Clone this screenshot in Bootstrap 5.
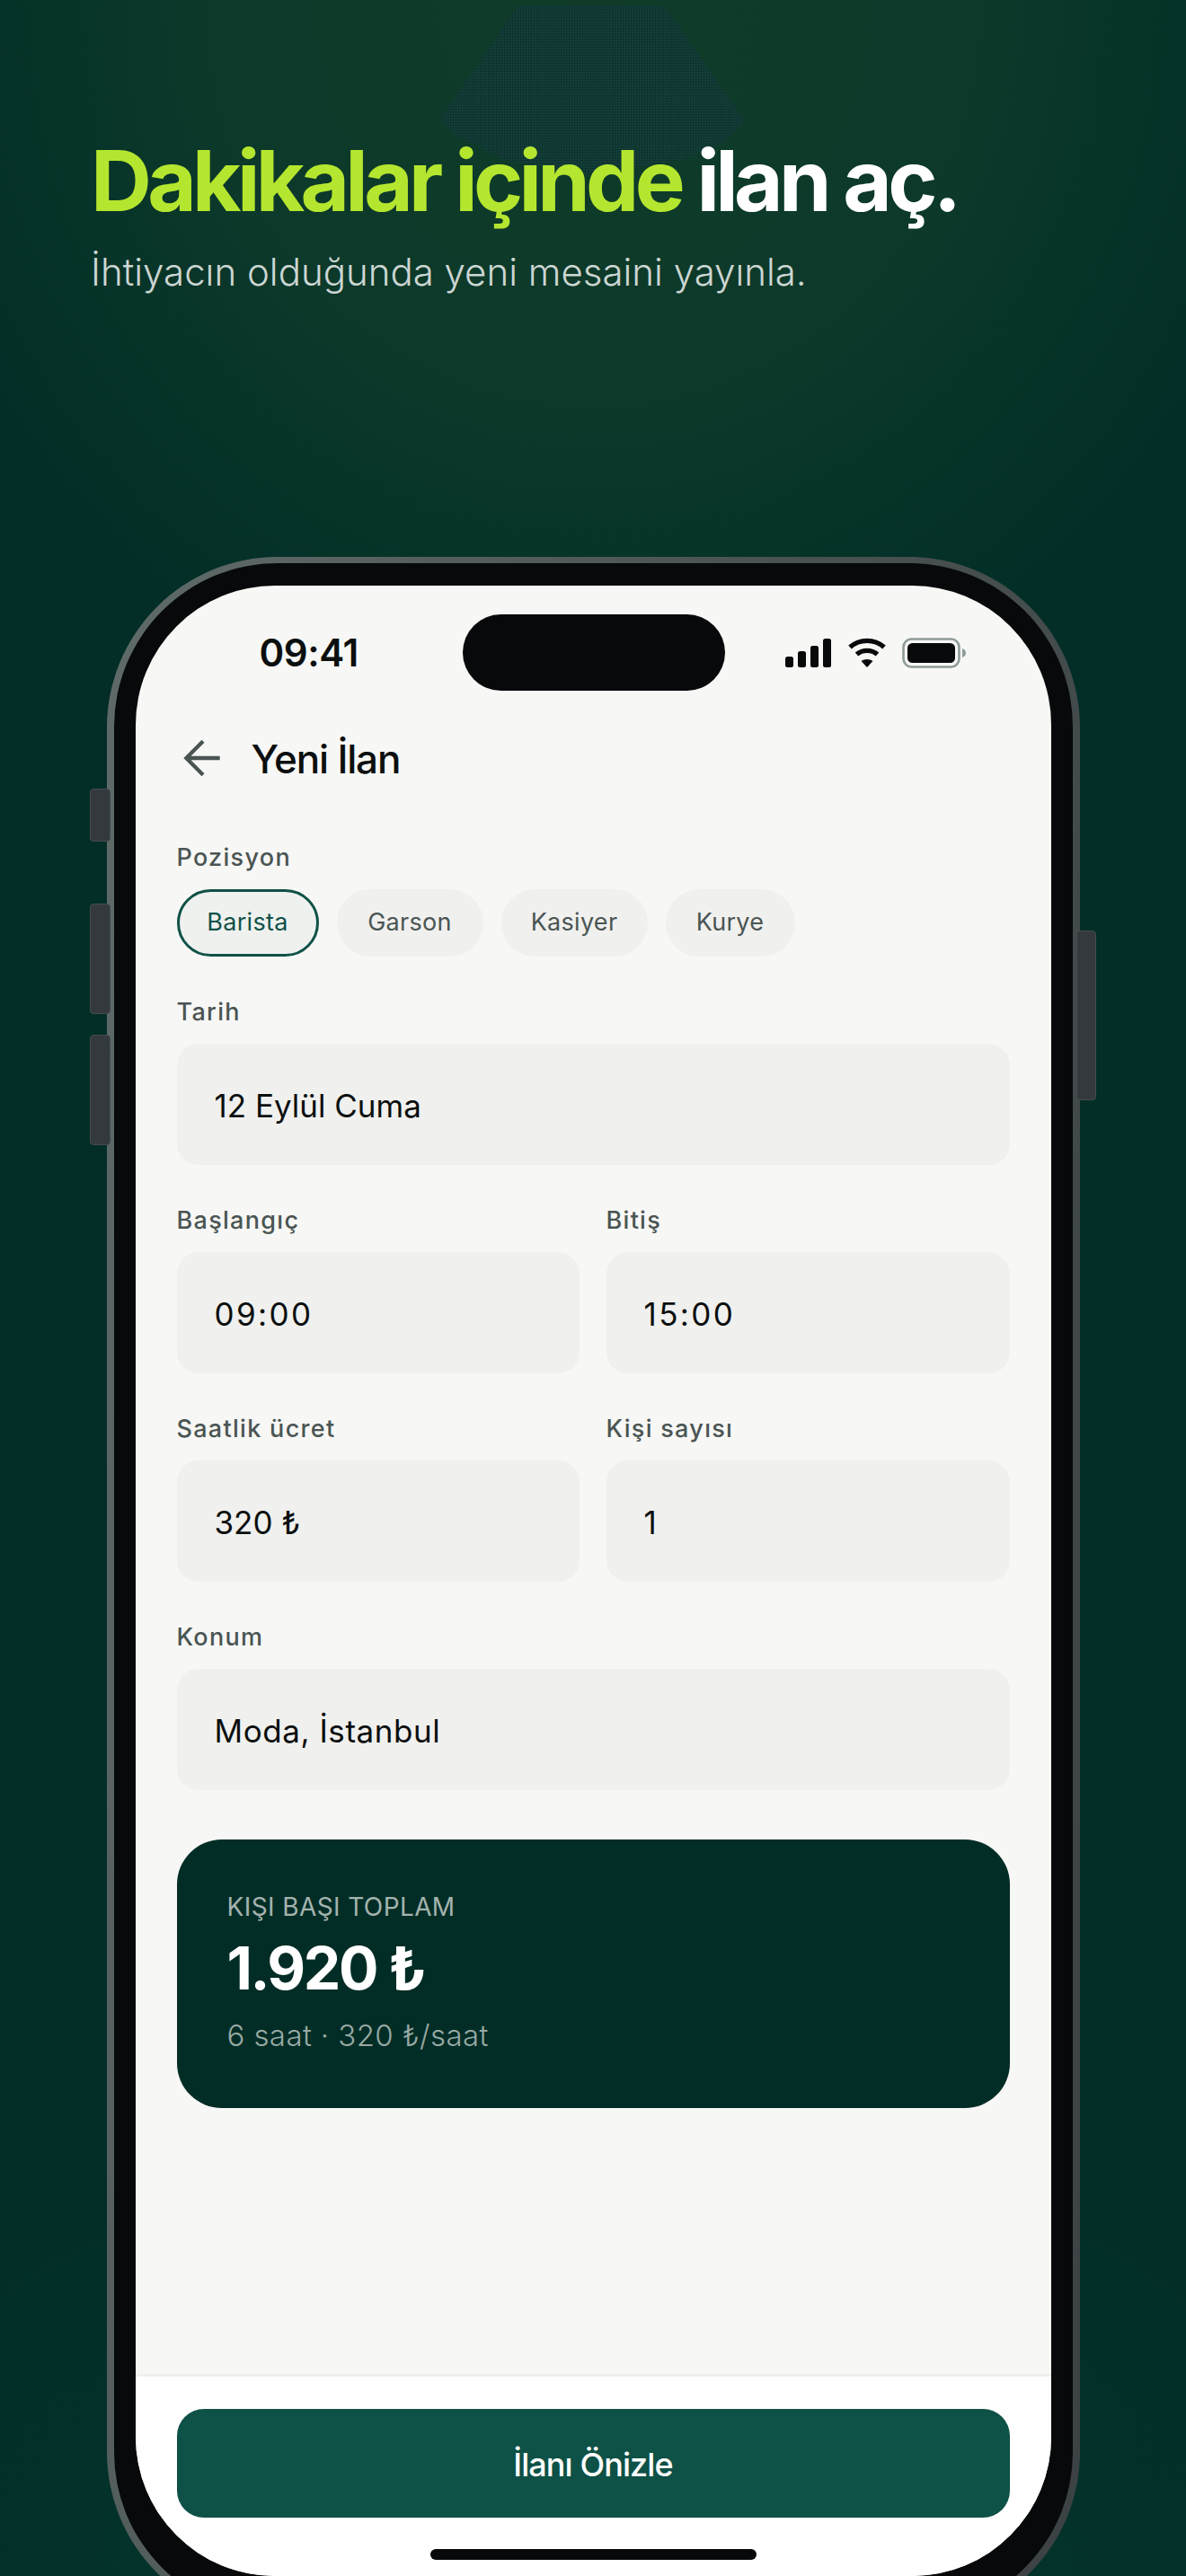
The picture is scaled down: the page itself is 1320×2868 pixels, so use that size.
<!DOCTYPE html>
<html lang="tr">
<head>
<meta charset="utf-8">
<title>Yeni İlan</title>
<link href="https://cdn.jsdelivr.net/npm/bootstrap@5.3.0/dist/css/bootstrap.min.css" rel="stylesheet">
<style>
html,body{height:2868px;overflow:hidden;margin:0}
body{position:relative;font-family:Inter,"Noto Sans",sans-serif;color:#0b0f0e;background:radial-gradient(ellipse 788px 824px at 660px 0,#103c28 0,#0c392a 55%,#022e27 100%) no-repeat,#022e27}
.botglow{position:absolute;left:0;right:0;bottom:0;height:500px;background:radial-gradient(ellipse 900px 500px at 50% 100%,#05382e,rgba(5,56,46,0) 100%)}
.hexshape{position:absolute;left:488px;top:3px}
.hero{position:relative;padding:148px 0 0 101px;height:620px}
.hero-title{font-size:94px;font-weight:700;line-height:106px;letter-spacing:-4.7px;margin:0;color:#fff}
.hero-title span{color:#b5e62f}
.hero-sub{font-size:42px;font-weight:300;line-height:48px;letter-spacing:0;color:#ccd6d2;margin:25px 0 0}
.phone-frame{position:relative;width:1083px;margin:0 auto;height:2300px;padding:7px 8px 8px;border-radius:190px;background:linear-gradient(100deg,#5f6b69,#4a5352 50%,#3c4144)}
.bezel{background:#07090a;border-radius:182px;padding:25px 24px 0;height:100%}
.screen{width:1019px;height:2216px;background:#f7f7f5;border-radius:155px;overflow:hidden}
.side-btn{position:absolute;width:23px;border-radius:4px;background:#33393c;border:1px solid #454c4e}
.sb1{left:-19px;top:258px;height:59px}
.sb2{left:-19px;top:386px;height:123px}
.sb3{left:-19px;top:532px;height:123px}
.sb4{right:-18px;top:416px;width:22px;height:189px}
.statusbar{padding-top:32px;height:117px}
.time-box{width:364px;padding-left:138px;font-size:42px;font-weight:600;line-height:85px;letter-spacing:-.4px}
.island{width:292px;height:85px;border-radius:44px;background:#07090a}
.status-icons{padding-left:67px;height:85px;gap:17px}
.content{padding:0 46px}
.headrow{margin-top:44px;height:64px;gap:22px}
.back-ico{margin-left:-3px;display:block;margin-top:-2px}
.page-title{font-size:44px;font-weight:500;letter-spacing:-1.2px;margin:0;line-height:64px}
.lbl{font-size:27px;font-weight:500;color:#4a5553;line-height:36px;margin:0 0 17px;letter-spacing:1.3px}
.form-area{margin-top:60px}
.group-gap{margin-top:44px}
.chip-row{gap:20px}
.chip{height:75px;border-radius:38px;background:#f0f0ee;color:#4a5553;font-size:27px;font-weight:400;letter-spacing:.3px;display:flex;align-items:center;justify-content:center;padding:0;border:0}
.chip-a{width:158px;background:#eff1ef;color:#0f5147;border:3px solid #0f5147}
.chip-b,.chip-c{width:163px}
.chip-d{width:144px}
.fieldbox{height:135px;border-radius:24px;background:#f0f0ee;display:flex;align-items:center;padding:3px 0 0 42px;font-size:35px;line-height:1;font-weight:400;letter-spacing:0;color:#0b0f0e}
.wide-val{letter-spacing:2.4px}
.loc-val{letter-spacing:.55px}
.two-col{display:grid;grid-template-columns:448px 449px;column-gap:30px}
.sumcard{margin-top:55px;height:299px;border-radius:50px;background:#022d26;padding:58px 56px 0;color:#fff}
.sum-l{font-size:28px;font-weight:400;line-height:34px;color:#a4b3ae;letter-spacing:.4px}
.sum-v{font-size:66px;font-weight:700;line-height:80px;letter-spacing:-2.4px;margin-top:11px}
.sum-s{font-size:33px;font-weight:300;line-height:40px;color:#97a9a3;margin-top:15px;letter-spacing:.4px}
.screen-col{height:2216px}
.footerbar{height:225px;background:#fff;border-top:3px solid #f0f0ee;padding:36px 46px 0}
.cta{display:block;width:100%;height:121px;border-radius:30px;background:#0e5146;color:#fff;border:0;font-size:36px;font-weight:500;letter-spacing:-.9px;padding:3px 0 0}
.cta:hover{background:#0e5146;color:#fff}
.homebar{width:363px;height:12px;border-radius:6px;background:#07090a;margin:35px auto 0}
</style>
</head>
<body>
<div class="botglow"></div>
<svg class="hexshape" width="342" height="192" viewBox="0 0 342 192" aria-hidden="true"><defs><pattern id="dith" width="3" height="3" patternUnits="userSpaceOnUse"><rect width="3" height="3" fill="#123732"/><rect width="1" height="1" fill="#0f4a41"/><rect x="1" y="1" width="1" height="1" fill="#142a28"/><rect x="2" y="2" width="1" height="1" fill="#0f443c"/></pattern></defs><path d="M92 3H242Q250 3 254 7L339 128Q340 132 337 136L319 154L275 174L165 192L72 174L19 147L4 133Q2 130 5 125L85 7Q88 3 92 3Z" fill="url(#dith)"/></svg>

<header class="hero">
  <h1 class="hero-title"><span>Dakikalar içinde</span> ilan aç.</h1>
  <p class="hero-sub">İhtiyacın olduğunda yeni mesaini yayınla.</p>
</header>

<div class="phone-frame">
  <div class="side-btn sb1"></div>
  <div class="side-btn sb2"></div>
  <div class="side-btn sb3"></div>
  <div class="side-btn sb4"></div>
  <div class="bezel">
    <div class="screen">
      <div class="screen-col d-flex flex-column">
        <div class="statusbar d-flex">
          <div class="time-box">09:41</div>
          <div class="island"></div>
          <div class="status-icons d-flex align-items-center">
            <svg width="52" height="32" viewBox="0 0 52 32" aria-hidden="true" fill="#07090a"><rect x="0" y="20" width="9" height="12" rx="2.5"/><rect x="14" y="14" width="9" height="18" rx="2.5"/><rect x="28" y="8" width="9" height="24" rx="2.5"/><rect x="42" y="0" width="9" height="32" rx="2.5"/></svg>
            <svg width="44" height="34" viewBox="0 0 44 34" aria-hidden="true" fill="none" stroke="#07090a" stroke-width="5.4"><path d="M3 10.5C14 1 30 1 41 10.5"/><path d="M10.5 18.5C17 13 27 13 33.5 18.5"/><path d="M22 33L15.5 26C19 23.2 25 23.2 28.5 26Z" fill="#07090a" stroke="none"/></svg>
            <svg width="72" height="34" viewBox="0 0 72 34" aria-hidden="true"><rect x="1.5" y="1.5" width="62" height="31" rx="9" fill="none" stroke="#8e9c98" stroke-width="2.6"/><rect x="6" y="6" width="53" height="22" rx="5.5" fill="#07090a"/><path d="M67 12C70 13 71 15 71 17C71 19 70 21 67 22Z" fill="#8e9c98"/></svg>
          </div>
        </div>
        <div class="content flex-grow-1">
          <div class="headrow d-flex align-items-center">
            <svg class="back-ico" width="64" height="64" viewBox="0 0 24 24" fill="none" stroke="#4a5553" stroke-width="1.6" stroke-linecap="butt" stroke-linejoin="miter" aria-hidden="true"><path d="M19 12H5M12 19l-7-7 7-7"/></svg>
            <h2 class="page-title">Yeni İlan</h2>
          </div>
          <div class="form-area">
            <div class="lbl">Pozisyon</div>
            <div class="chip-row d-flex">
              <button type="button" class="btn chip chip-a">Barista</button>
              <button type="button" class="btn chip chip-b">Garson</button>
              <button type="button" class="btn chip chip-c">Kasiyer</button>
              <button type="button" class="btn chip chip-d">Kurye</button>
            </div>
            <div class="group-gap">
              <div class="lbl">Tarih</div>
              <div class="fieldbox">12 Eylül Cuma</div>
            </div>
            <div class="group-gap two-col">
              <div><div class="lbl">Başlangıç</div><div class="fieldbox wide-val">09:00</div></div>
              <div><div class="lbl">Bitiş</div><div class="fieldbox wide-val">15:00</div></div>
            </div>
            <div class="group-gap two-col">
              <div><div class="lbl">Saatlik ücret</div><div class="fieldbox">320 ₺</div></div>
              <div><div class="lbl">Kişi sayısı</div><div class="fieldbox">1</div></div>
            </div>
            <div class="group-gap">
              <div class="lbl">Konum</div>
              <div class="fieldbox loc-val">Moda, İstanbul</div>
            </div>
          </div>
          <div class="sumcard">
            <div class="sum-l">KIŞI BAŞI TOPLAM</div>
            <div class="sum-v">1.920 ₺</div>
            <div class="sum-s">6 saat · 320 ₺/saat</div>
          </div>
        </div>
        <div class="footerbar">
          <button type="button" class="btn cta">İlanı Önizle</button>
          <div class="homebar"></div>
        </div>
      </div>
    </div>
  </div>
</div>
<script src="https://cdn.jsdelivr.net/npm/bootstrap@5.3.0/dist/js/bootstrap.bundle.min.js"></script>
</body>
</html>
